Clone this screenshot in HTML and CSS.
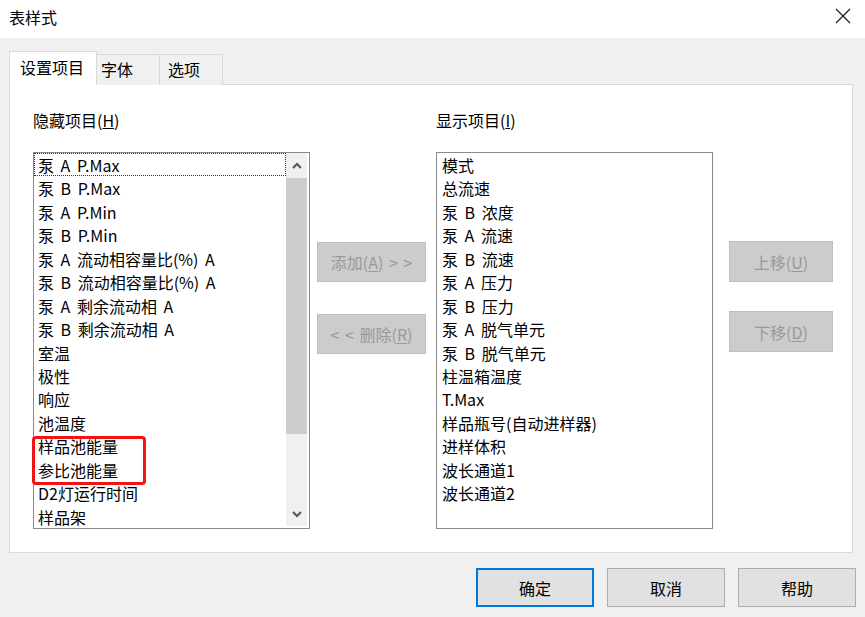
FILE: index.html
```html
<!DOCTYPE html>
<html>
<head>
	<meta charset="utf-8">
	<title>表样式</title>
	<link rel="stylesheet" href="styles.css">
</head>
<body>
<div class="dialog">
	<div class="title-bar">
		<span class="title">表样式</span>
		<svg class="close" width="16" height="16" viewBox="0 0 16 16">
			<path d="M1 1 L15 15 M15 1 L1 15" stroke="#1a1a1a" stroke-width="1.2" fill="none"/>
		</svg>
	</div>
	<div class="dialog-body">
		<div class="tabs">
			<span class="tab tab-active">设置项目</span>
			<span class="tab">字体</span>
			<span class="tab">选项</span>
		</div>
		<div class="panel">
			<div class="col col-list">
				<div class="label">隐藏项目(<u>H</u>)</div>
				<div class="listbox">
					<ul class="items">
						<li class="focus">泵 A P.Max</li>
						<li>泵 B P.Max</li>
						<li>泵 A P.Min</li>
						<li>泵 B P.Min</li>
						<li>泵 A 流动相容量比(%) A</li>
						<li>泵 B 流动相容量比(%) A</li>
						<li>泵 A 剩余流动相 A</li>
						<li>泵 B 剩余流动相 A</li>
						<li>室温</li>
						<li>极性</li>
						<li>响应</li>
						<li>池温度</li>
						<li>样品池能量</li>
						<li>参比池能量</li>
						<li>D2灯运行时间</li>
						<li>样品架</li>
					</ul>
					<div class="scrollbar">
						<div class="sb-btn">
							<svg width="10" height="7" viewBox="0 0 10 7"><path d="M1 6 L5 2 L9 6" stroke="#555" stroke-width="2" fill="none"/></svg>
						</div>
						<div class="sb-thumb"></div>
						<div class="sb-track"></div>
						<div class="sb-btn">
							<svg width="10" height="7" viewBox="0 0 10 7"><path d="M1 1 L5 5 L9 1" stroke="#555" stroke-width="2" fill="none"/></svg>
						</div>
					</div>
					<!-- red mark round the two energy rows -->
					<div class="mark"></div>
				</div>
			</div>

			<div class="col col-mid">
				<button class="btn btn-disabled">添加(<u>A</u>) &gt; &gt;</button>
				<button class="btn btn-disabled btn-del">&lt; &lt; 删除(<u>R</u>)</button>
			</div>

			<div class="col col-list col-right">
				<div class="label">显示项目(<u>I</u>)</div>
				<div class="listbox">
					<ul class="items items-right">
						<li>模式</li>
						<li>总流速</li>
						<li>泵 B 浓度</li>
						<li>泵 A 流速</li>
						<li>泵 B 流速</li>
						<li>泵 A 压力</li>
						<li>泵 B 压力</li>
						<li>泵 A 脱气单元</li>
						<li>泵 B 脱气单元</li>
						<li>柱温箱温度</li>
						<li>T.Max</li>
						<li>样品瓶号(自动进样器)</li>
						<li>进样体积</li>
						<li>波长通道1</li>
						<li>波长通道2</li>
					</ul>
				</div>
			</div>

			<div class="col col-move">
				<button class="btn btn-disabled btn-move">上移(<u>U</u>)</button>
				<button class="btn btn-disabled btn-move btn-down">下移(<u>D</u>)</button>
			</div>
		</div>
		<div class="footer">
			<button class="btn btn-foot btn-default">确定</button>
			<button class="btn btn-foot">取消</button>
			<button class="btn btn-foot">帮助</button>
		</div>
	</div>
</div>
</body>
</html>
```

FILE: styles.css
```css
body, ul {
	margin: 0;
}

ul {
	padding-left: 0;
	list-style: none;
}

body {
	font-family: "Noto Sans CJK SC", "Noto Sans", sans-serif;
	font-size: 16px;
	color: #000;
	background: #f0f0f0;
}

.dialog {
	width: 865px;
	height: 617px;
	overflow: hidden;
}

.title-bar {
	height: 38px;
	background: #ffffff;
	display: flex;
	align-items: center;
	justify-content: space-between;
	padding: 0 14px 0 9px;
}

.title {
	font-size: 16px;
	line-height: 20px;
	margin-top: -4px;
}

.close {
	margin-top: -6px;
}

.dialog-body {
	padding: 13px 0 0 9px;
}

.tabs {
	display: flex;
	align-items: flex-end;
	height: 33px;
}

.tab {
	display: block;
	height: 31px;
	line-height: 29px;
	padding: 0 10px 0 4px;
	background: #f0f0f0;
	border: 1px solid #d9d9d9;
	border-bottom: none;
	box-sizing: border-box;
	margin-bottom: -1px;
	position: relative;
}

.tab + .tab {
	border-left: none;
}

.tab-active {
	height: 34px;
	background: #ffffff;
	padding: 0 12px 0 10px;
	line-height: 30px;
	z-index: 1;
}

.tab:nth-child(2) {
	width: 63px;
	padding: 0 0 0 4px;
}

.tab:nth-child(3) {
	width: 63px;
	padding: 0 0 0 8px;
}

.panel {
	width: 844px;
	height: 469px;
	box-sizing: border-box;
	background: #ffffff;
	border: 1px solid #d9d9d9;
	display: flex;
	padding: 25px 0 0 23px;
}

.col {
	display: flex;
	flex-direction: column;
}

.label {
	height: 20px;
	line-height: 20px;
	margin-bottom: 22px;
}

.listbox {
	position: relative;
	width: 277px;
	height: 377px;
	box-sizing: border-box;
	border: 1px solid #8a8a8a;
	display: flex;
}

.items {
	flex: 1;
}

.items li {
	height: 23.45px;
	line-height: 24.5px;
	padding-left: 4px;
	white-space: nowrap;
	word-spacing: 3px;
	box-sizing: border-box;
}

.items li.focus {
	outline: 1px dotted #333;
	outline-offset: -1px;
}

.items-right li {
	padding-left: 5px;
}

.scrollbar {
	width: 21px;
	margin: 0 2px 2px 0;
	background: #f0f0f0;
	display: flex;
	flex-direction: column;
}

.sb-btn {
	height: 25px;
	display: flex;
	align-items: center;
	justify-content: center;
}

.sb-btn:last-child {
	height: 23px;
}

.sb-thumb {
	height: 256px;
	background: #cdcdcd;
}

.sb-track {
	flex: 1;
}

.mark {
	position: absolute;
	left: -2px;
	top: 283px;
	width: 114px;
	height: 49px;
	box-sizing: border-box;
	border: 3px solid #f01414;
	border-radius: 4px;
}

.btn {
	font-family: inherit;
	font-size: 16px;
	padding: 0;
	box-sizing: border-box;
	background: #e1e1e1;
	border: 1px solid #adadad;
	color: #000;
}

.btn u {
	text-underline-offset: 2px;
}

.btn-disabled {
	background: #cccccc;
	border-color: #bfbfbf;
	color: #999999;
	word-spacing: 2px;
}

.col-mid {
	margin-left: 7px;
	padding-top: 132px;
}

.col-mid .btn {
	width: 109px;
	height: 40px;
}

.btn-del {
	margin-top: 32px;
}

.col-right {
	margin-left: 10px;
}

.col-move {
	margin-left: 16px;
	padding-top: 131px;
}

.btn-move {
	width: 104px;
	height: 41px;
}

.btn-down {
	margin-top: 29px;
}

.footer {
	display: flex;
	justify-content: flex-end;
	gap: 13px;
	padding: 15px 9px 0 0;
}

.btn-foot {
	width: 118px;
	height: 39px;
}

.btn-default {
	border: 2px solid #0078d7;
}
```
